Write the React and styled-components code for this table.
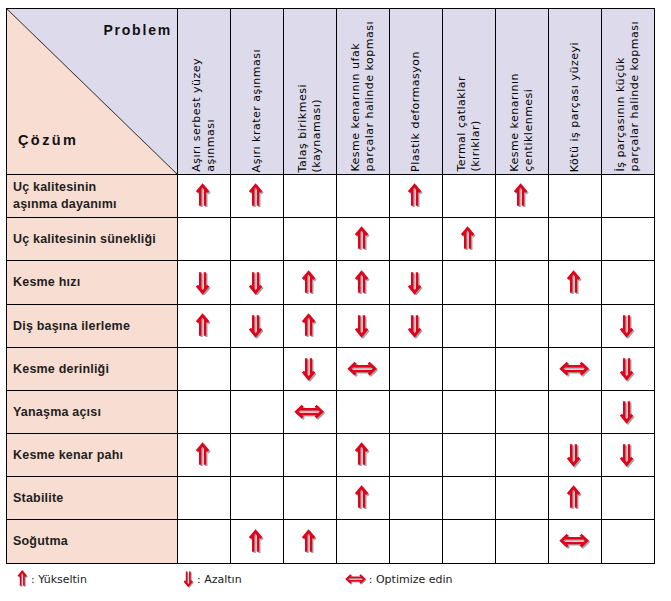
import React from "react";
import styled, { createGlobalStyle } from "styled-components";

const Global = createGlobalStyle`
  html, body { margin: 0; padding: 0; background: #ffffff; }
  body { font-family: "DejaVu Sans", "Liberation Sans", sans-serif; color: #1a1a1a; }
`;

const Page = styled.div`
  width: 671px;
  height: 601px;
  padding: 8px 0 0 6px;
  box-sizing: border-box;
`;

const Table = styled.div`
  display: grid;
  grid-template-columns: 170px repeat(9, 52px);
  grid-template-rows: 165px 42px 42px 43px 42px 42px 42px 42px 42px 43px;
  gap: 1px;
  padding: 1px;
  background: #000;
  width: max-content;
`;

const Corner = styled.div`
  background: linear-gradient(
    to top right,
    #f8ddd3 calc(50% - 0.8px),
    #3a3a3a 50%,
    #dddbeb calc(50% + 0.8px)
  );
  display: flex;
  flex-direction: column;
  justify-content: space-between;
  padding: 13px 5px 26px 11px;
  box-sizing: border-box;
`;

const CornerLabel = styled.div`
  font-family: "Liberation Sans", sans-serif;
  font-weight: 700;
  font-size: ${(p) => (p.$right ? "14px" : "14.5px")};
  letter-spacing: ${(p) => (p.$right ? "1.8px" : "2.4px")};
  color: #111;
  align-self: ${(p) => (p.$right ? "flex-end" : "flex-start")};
`;

const HeadCell = styled.div`
  background: #dddbeb;
  display: flex;
  align-items: flex-end;
  justify-content: center;
  padding-bottom: 2px;
  box-sizing: border-box;
`;

const HeadText = styled.span`
  writing-mode: vertical-rl;
  transform: rotate(180deg);
  font-family: "DejaVu Sans", sans-serif;
  font-size: 11px;
  letter-spacing: 0.5px;
  line-height: 14px;
  color: #000;
  white-space: nowrap;
`;

const RowLabel = styled.div`
  background: #f8ddd3;
  display: flex;
  align-items: center;
  padding-left: 6px;
  font-family: "Liberation Sans", sans-serif;
  font-weight: 700;
  font-size: 12.5px;
  line-height: 17px;
  letter-spacing: 0.2px;
  color: #1f1f1f;
`;

const Cell = styled.div`
  background: #ffffff;
  display: flex;
  align-items: center;
  justify-content: center;
`;

const Legend = styled.div`
  display: grid;
  grid-template-columns: 166px 162px auto;
  padding: 6px 0 0 11px;
  font-family: "DejaVu Sans", sans-serif;
  font-size: 11px;
  color: #1a1a1a;
`;

const LegendItem = styled.div`
  display: flex;
  align-items: center;
  gap: 2px;
`;

const RED = "#e3001b";
const SHADOW = "#a3a3a3";

function ArrowShape({ dir }) {
  if (dir === "both") {
    return (
      <>
        <path d="M8 2.5 L2.2 8 L8 13.5 M20 2.5 L25.8 8 L20 13.5" fill="none" strokeWidth="2.6" strokeLinejoin="miter" />
        <path d="M4 5.8 H24 M4 10.2 H24" fill="none" strokeWidth="2.2" />
      </>
    );
  }
  if (dir === "down") {
    return (
      <>
        <path d="M1.8 14.5 L7 20.8 L12.2 14.5" fill="none" strokeWidth="2.6" strokeLinejoin="miter" />
        <path d="M4.8 2 V18 M9.2 2 V18" fill="none" strokeWidth="2.2" />
      </>
    );
  }
  return (
    <>
      <path d="M1.8 8.5 L7 2.2 L12.2 8.5" fill="none" strokeWidth="2.6" strokeLinejoin="miter" />
      <path d="M4.8 5 V21 M9.2 5 V21" fill="none" strokeWidth="2.2" />
    </>
  );
}

function Arrow({ dir, scale = 1.08 }) {
  const both = dir === "both";
  const w = both ? 29 : 16;
  const h = both ? 17 : 24;
  return (
    <svg width={w * scale} height={h * scale} viewBox={`0 0 ${w} ${h}`}>
      <g transform="translate(1.3,1.3)" stroke={SHADOW}>
        <ArrowShape dir={dir} />
      </g>
      <g stroke={RED}>
        <ArrowShape dir={dir} />
      </g>
    </svg>
  );
}

const headers = [
  ["Aşırı serbest yüzey", "aşınması"],
  ["Aşırı krater aşınması"],
  ["Talaş birikmesi", "(kaynaması)"],
  ["Kesme kenarının ufak", "parçalar halinde kopması"],
  ["Plastik deformasyon"],
  ["Termal çatlaklar", "(kırıklar)"],
  ["Kesme kenarının", "çentiklenmesi"],
  ["Kötü iş parçası yüzeyi"],
  ["İş parçasının küçük", "parçalar halinde kopması"],
];

const U = "up";
const D = "down";
const B = "both";
const _ = null;

const rows = [
  { label: ["Uç kalitesinin", "aşınma dayanımı"], cells: [U, U, _, _, U, _, U, _, _] },
  { label: ["Uç kalitesinin sünekliği"], cells: [_, _, _, U, _, U, _, _, _] },
  { label: ["Kesme hızı"], cells: [D, D, U, U, D, _, _, U, _] },
  { label: ["Diş başına ilerleme"], cells: [U, D, U, D, D, _, _, _, D] },
  { label: ["Kesme derinliği"], cells: [_, _, D, B, _, _, _, B, D] },
  { label: ["Yanaşma açısı"], cells: [_, _, B, _, _, _, _, _, D] },
  { label: ["Kesme kenar pahı"], cells: [U, _, _, U, _, _, _, D, D] },
  { label: ["Stabilite"], cells: [_, _, _, U, _, _, _, U, _] },
  { label: ["Soğutma"], cells: [_, U, U, _, _, _, _, B, _] },
];

function Lines({ parts }) {
  return parts.map((p, i) => (
    <React.Fragment key={i}>
      {i > 0 && <br />}
      {p}
    </React.Fragment>
  ));
}

export default function App() {
  return (
    <Page>
      <Global />
      <Table>
        <Corner>
          <CornerLabel $right>Problem</CornerLabel>
          <CornerLabel>Çözüm</CornerLabel>
        </Corner>
        {headers.map((h, i) => (
          <HeadCell key={i}>
            <HeadText>
              <Lines parts={h} />
            </HeadText>
          </HeadCell>
        ))}
        {rows.map((r, ri) => (
          <React.Fragment key={ri}>
            <RowLabel>
              <div>
                <Lines parts={r.label} />
              </div>
            </RowLabel>
            {r.cells.map((c, ci) => (
              <Cell key={ci}>{c && <Arrow dir={c} />}</Cell>
            ))}
          </React.Fragment>
        ))}
      </Table>
      <Legend>
        <LegendItem>
          <Arrow dir="up" scale={0.75} />
          <span>: Yükseltin</span>
        </LegendItem>
        <LegendItem>
          <Arrow dir="down" scale={0.75} />
          <span>: Azaltın</span>
        </LegendItem>
        <LegendItem>
          <Arrow dir="both" scale={0.75} />
          <span>: Optimize edin</span>
        </LegendItem>
      </Legend>
    </Page>
  );
}
